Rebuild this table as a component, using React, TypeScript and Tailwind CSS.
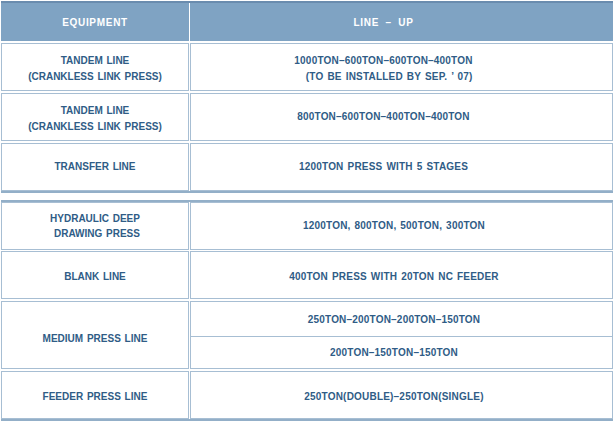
import React from "react";

const txt = "text-[#2f5c86] text-[10px] font-bold leading-[16px] [word-spacing:1px]";
const cell = "border border-[#a7bed3] flex items-center justify-center text-center";

function Row({
  left,
  right,
  h,
  mt,
  rightPad,
  lpt = "",
  rpt = "",
}: {
  left: React.ReactNode;
  right: React.ReactNode;
  h: string;
  mt: string;
  rightPad: string;
  lpt?: string;
  rpt?: string;
}) {
  return (
    <div className={`flex ${h} ${mt}`}>
      <div className={`${cell} w-[188px] shrink-0 ${lpt}`}>{left}</div>
      <div className="w-[1px] shrink-0" />
      <div className={`${cell} flex-1 tracking-[0.2px] ${rightPad} ${rpt}`}>{right}</div>
    </div>
  );
}

export default function App() {
  return (
    <div
      className="w-[614px] h-[436px] bg-white pt-[1px] pl-[1px]"
      style={{ fontFamily: '"Liberation Sans", Arial, sans-serif' }}
    >
      <div className="w-[612px]">
        {/* Table A */}
        <div className="flex h-[40px] border-t-2 border-[#6a8cae] bg-[#7fa3c3]">
          <div className="w-[188px] shrink-0 flex items-center justify-center text-white text-[10px] font-bold tracking-[0.7px]">
            EQUIPMENT
          </div>
          <div className="w-[1px] bg-white shrink-0" />
          <div className="flex-1 flex items-center justify-center pr-[36px] text-white text-[10px] font-bold tracking-[0.7px] [word-spacing:3px]">
            LINE – UP
          </div>
        </div>
        <div className={txt}>
          <Row
            h="h-[48px]"
            mt="mt-[2px]"
            rightPad="pr-[36px]"
            lpt="pt-[4px]"
            rpt="pt-[4px]"
            left={
              <div>
                <div>TANDEM LINE</div>
                <div>(CRANKLESS LINK PRESS)</div>
              </div>
            }
            right={
              <div className="flex flex-col items-end">
                <div>1000TON–600TON–600TON–400TON</div>
                <div>(TO BE INSTALLED BY SEP. ’ 07)</div>
              </div>
            }
          />
          <Row
            h="h-[48px]"
            mt="mt-[2px]"
            rightPad="pr-[36px]"
            lpt="pt-[3px]"
            left={
              <div>
                <div>TANDEM LINE</div>
                <div>(CRANKLESS LINK PRESS)</div>
              </div>
            }
            right={<div>800TON–600TON–400TON–400TON</div>}
          />
          <Row
            h="h-[48px]"
            mt="mt-[2px]"
            rightPad="pr-[36px]"
            left={<div>TRANSFER LINE</div>}
            right={<div>1200TON PRESS WITH 5 STAGES</div>}
          />
        </div>
        <div className="h-[2px] bg-[#93afc8]" />

        {/* Table B */}
        <div className="mt-[7px] border-t-2 border-b-2 border-[#93afc8]">
          <div className={txt}>
            <Row
              h="h-[48px]"
              mt="mt-0"
              rightPad="pr-[15px]"
              left={
                <div className="flex flex-col items-end leading-[15px]">
                  <div>HYDRAULIC DEEP</div>
                  <div>DRAWING PRESS</div>
                </div>
              }
              right={<div>1200TON, 800TON, 500TON, 300TON</div>}
            />
            <Row
              h="h-[48px]"
              mt="mt-[1px]"
              rightPad="pr-[15px]"
              lpt="pt-[4px]"
              rpt="pt-[4px]"
              left={<div>BLANK LINE</div>}
              right={<div>400TON PRESS WITH 20TON NC FEEDER</div>}
            />
            <div className="flex h-[68px] mt-[2px]">
              <div className={`${cell} w-[188px] shrink-0 pt-[7px]`}>
                <div>MEDIUM PRESS LINE</div>
              </div>
              <div className="w-[1px] shrink-0" />
              <div className="flex-1 flex flex-col tracking-[0.2px]">
                <div className="h-[36px] border border-[#a7bed3] flex items-center justify-center pr-[15px] pt-[2px]">
                  250TON–200TON–200TON–150TON
                </div>
                <div className="flex-1 border border-t-0 border-[#a7bed3] flex items-center justify-center pr-[15px]">
                  200TON–150TON–150TON
                </div>
              </div>
            </div>
            <Row
              h="h-[48px]"
              mt="mt-[2px]"
              rightPad="pr-[15px]"
              lpt="pt-[4px]"
              rpt="pt-[4px]"
              left={<div>FEEDER PRESS LINE</div>}
              right={<div>250TON(DOUBLE)–250TON(SINGLE)</div>}
            />
          </div>
        </div>
      </div>
    </div>
  );
}
